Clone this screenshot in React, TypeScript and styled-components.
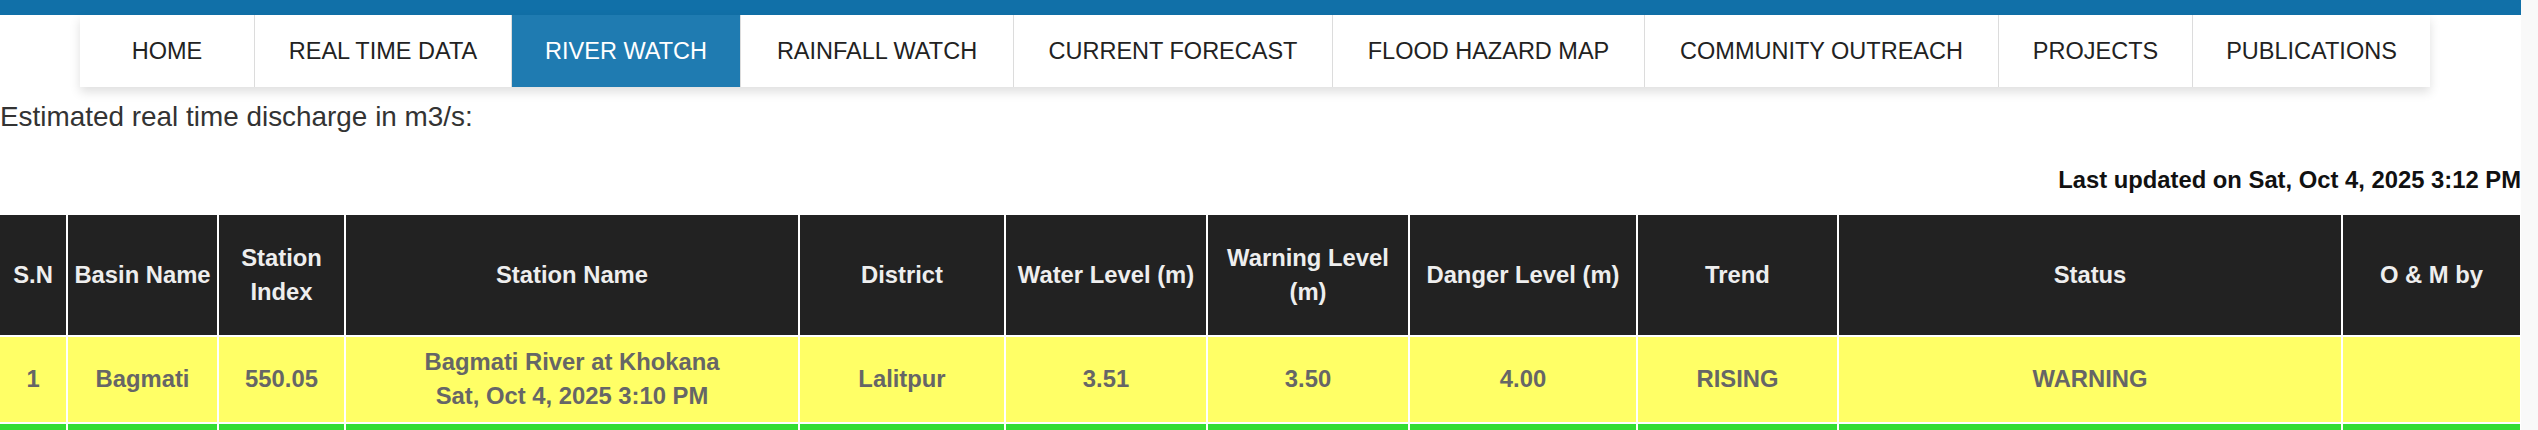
import React from "react";
import styled, { createGlobalStyle } from "styled-components";

const GlobalStyle = createGlobalStyle`
  html, body {
    margin: 0;
    padding: 0;
    background: #f9f9f9;
  }
  body {
    font-family: "Liberation Sans", Arial, Helvetica, sans-serif;
  }
`;

const Page = styled.div`
  width: calc(100% - 17px);
  min-height: 430px;
  background: #ffffff;
  overflow: hidden;
`;

const TopBar = styled.div`
  height: 15px;
  background: #1170a8;
`;

const Nav = styled.nav`
  display: flex;
  width: 2350px;
  margin-left: 80px;
  background: #ffffff;
  box-shadow: 0 5px 10px rgba(0, 0, 0, 0.13);
`;

const NavItem = styled.a<{ $w: number; $active?: boolean; $first?: boolean }>`
  box-sizing: border-box;
  width: ${(p) => p.$w}px;
  height: 72px;
  display: flex;
  align-items: center;
  justify-content: center;
  font-size: 23.5px;
  color: ${(p) => (p.$active ? "#ffffff" : "#222222")};
  background: ${(p) => (p.$active ? "#1f7bb1" : "#ffffff")};
  border-left: ${(p) => (p.$first ? "none" : "1px solid #dcdcdc")};
  text-decoration: none;
  white-space: nowrap;
`;

const Caption = styled.p`
  margin: 10px 0 0;
  font-size: 27.9px;
  line-height: 1.42857;
  color: #333333;
`;

const Updated = styled.p`
  margin: 26px 0 0;
  text-align: right;
  font-weight: bold;
  font-size: 23.8px;
  line-height: 34px;
  color: #111111;
`;

const Table = styled.table`
  margin: 16px 0 0 -2px;
  width: 2524px;
  table-layout: fixed;
  border-collapse: separate;
  border-spacing: 2px;
  font-size: 23.8px;
  line-height: 34px;
  font-weight: bold;
`;

const HeadCell = styled.th`
  background: #222222;
  color: #eeeeee;
  padding: 26px 5px;
  text-align: center;
  vertical-align: middle;
`;

const Row = styled.tr<{ $bg: string }>`
  background: ${(p) => p.$bg};
`;

const Cell = styled.td`
  padding: 8.5px 5px;
  color: #666666;
  text-align: center;
  vertical-align: middle;
`;

const navItems = [
  { label: "HOME", w: 174 },
  { label: "REAL TIME DATA", w: 257 },
  { label: "RIVER WATCH", w: 229, active: true },
  { label: "RAINFALL WATCH", w: 273 },
  { label: "CURRENT FORECAST", w: 319 },
  { label: "FLOOD HAZARD MAP", w: 312 },
  { label: "COMMUNITY OUTREACH", w: 354 },
  { label: "PROJECTS", w: 194 },
  { label: "PUBLICATIONS", w: 238 },
];

const columns = [
  { label: "S.N", w: 66 },
  { label: "Basin Name", w: 149 },
  { label: "Station Index", w: 125 },
  { label: "Station Name", w: 452 },
  { label: "District", w: 204 },
  { label: "Water Level (m)", w: 200 },
  { label: "Warning Level (m)", w: 200 },
  { label: "Danger Level (m)", w: 226 },
  { label: "Trend", w: 199 },
  { label: "Status", w: 502 },
  { label: "O & M by", w: 177 },
];

export default function App() {
  return (
    <>
      <GlobalStyle />
      <Page>
        <TopBar />
        <Nav>
          {navItems.map((n, i) => (
            <NavItem key={n.label} href="#" $w={n.w} $active={n.active} $first={i === 0}>
              {n.label}
            </NavItem>
          ))}
        </Nav>
        <Caption>Estimated real time discharge in m3/s:</Caption>
        <Updated>Last updated on Sat, Oct 4, 2025 3:12 PM</Updated>
        <Table>
          <colgroup>
            {columns.map((c) => (
              <col key={c.label} style={{ width: c.w }} />
            ))}
          </colgroup>
          <thead>
            <tr>
              {columns.map((c) => (
                <HeadCell key={c.label}>{c.label}</HeadCell>
              ))}
            </tr>
          </thead>
          <tbody>
            <Row $bg="#ffff66">
              <Cell>1</Cell>
              <Cell>Bagmati</Cell>
              <Cell>550.05</Cell>
              <Cell>
                Bagmati River at Khokana
                <br />
                Sat, Oct 4, 2025 3:10 PM
              </Cell>
              <Cell>Lalitpur</Cell>
              <Cell>3.51</Cell>
              <Cell>3.50</Cell>
              <Cell>4.00</Cell>
              <Cell>RISING</Cell>
              <Cell>WARNING</Cell>
              <Cell></Cell>
            </Row>
            <Row $bg="#33dd33">
              {columns.map((c) => (
                <Cell key={c.label}>&nbsp;</Cell>
              ))}
            </Row>
          </tbody>
        </Table>
      </Page>
    </>
  );
}
